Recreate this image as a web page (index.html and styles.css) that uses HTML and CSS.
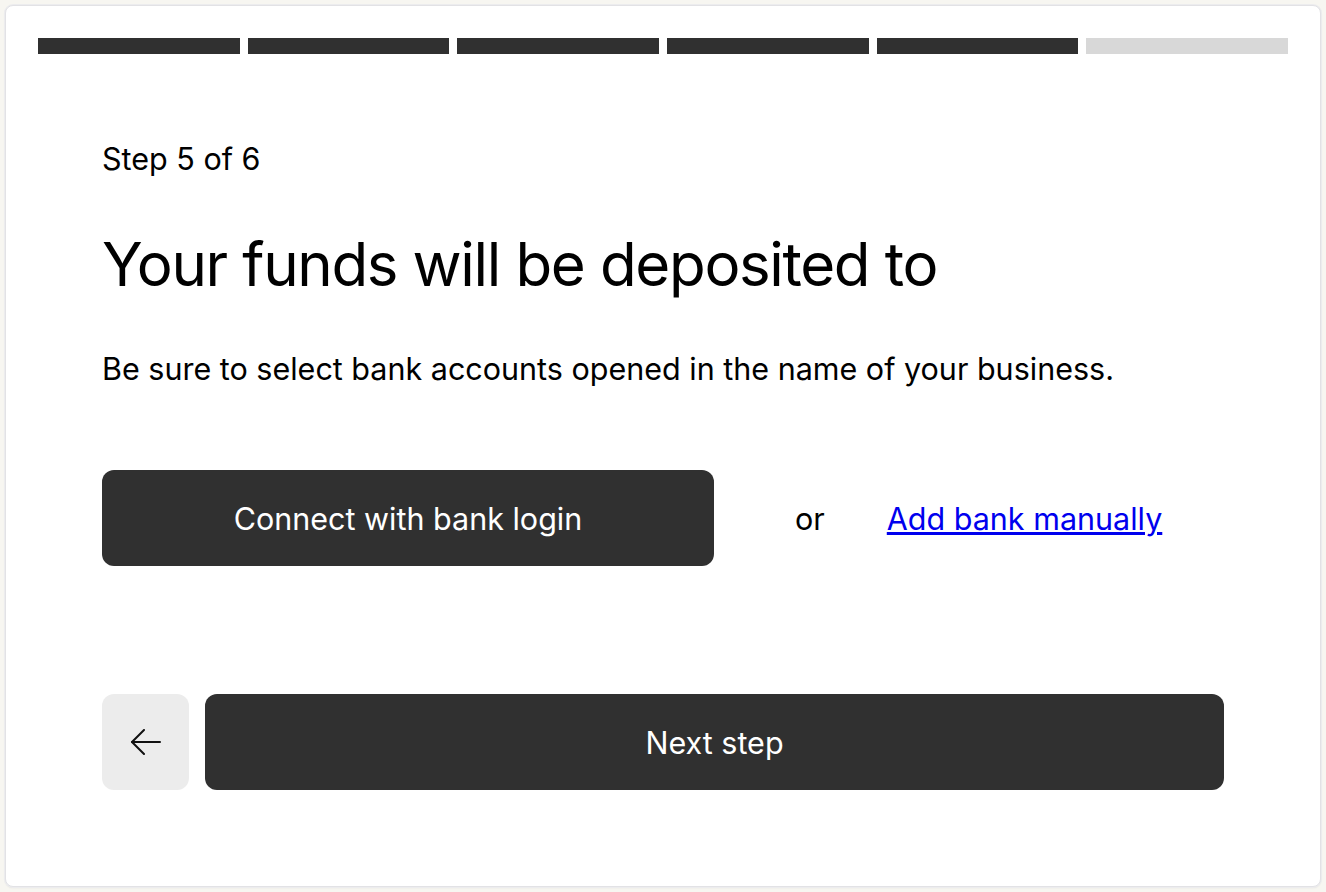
FILE: index.html
```html
<!DOCTYPE html>
<html lang="en">
<head>
    <meta charset="UTF-8">
    <meta name="viewport" content="width=device-width, initial-scale=1.0">
    <title>Bank Account Setup</title>
    <link rel="stylesheet" href="styles.css">
</head>
<body>
    <div class="card">
        <!-- Progress bar -->
        <div class="progress">
            <span class="segment done"></span>
            <span class="segment done"></span>
            <span class="segment done"></span>
            <span class="segment done"></span>
            <span class="segment done"></span>
            <span class="segment"></span>
        </div>

        <div class="content">
            <p class="step">Step 5 of 6</p>
            <h1>Your funds will be deposited to</h1>
            <p class="lead">Be sure to select bank accounts opened in the name of your business.</p>

            <div class="connect-row">
                <button class="btn btn-dark connect">Connect with bank login</button>
                <span class="or">or</span>
                <a href="#" class="manual-link">Add bank manually</a>
            </div>

            <div class="nav-row">
                <button class="btn btn-back" aria-label="Back">
                    <svg width="32" height="26" viewBox="0 0 32 26" fill="none" stroke="#111" stroke-width="2" stroke-linecap="round" stroke-linejoin="round">
                        <path d="M30 13H2"/>
                        <path d="M14 1L2 13l12 12"/>
                    </svg>
                </button>
                <button class="btn btn-dark next">Next step</button>
            </div>
        </div>
    </div>
</body>
</html>
```

FILE: styles.css
```css
body {
    margin: 0;
    padding: 5px;
    background-color: #f7f6f1;
    font-family: Inter, "Noto Sans", sans-serif;
    color: #000;
}
.card {
    background-color: #ffffff;
    border: 1px solid #e2e2e5;
    border-radius: 8px;
    box-shadow: 0 0 0 1px #ececee, 0 1px 2px rgba(0, 0, 0, 0.08);
    padding: 32px 32px 96px;
    min-height: 882px;
    box-sizing: border-box;
}
.progress {
    display: flex;
    gap: 8px;
}
.segment {
    flex: 1;
    height: 16px;
    background-color: #d8d8d8;
}
.segment.done {
    background-color: #303030;
}
.content {
    padding: 0 64px;
}
.step {
    margin: 88px 0 0;
    font-size: 30.5px;
    line-height: 34px;
}
h1 {
    margin: 54px 0 0;
    font-size: 60px;
    font-weight: 400;
    line-height: 68px;
    letter-spacing: -1.35px;
}
.lead {
    margin: 54px 0 0;
    font-size: 30.5px;
    line-height: 34px;
}
.btn {
    border: none;
    border-radius: 12px;
    height: 96px;
    font-family: inherit;
    font-size: 30.5px;
    cursor: pointer;
}
.btn-dark {
    background-color: #303030;
    color: #ffffff;
}
.connect-row {
    display: flex;
    align-items: center;
    margin-top: 84px;
}
.connect {
    width: 612px;
}
.or {
    font-size: 30.5px;
    margin-left: 81px;
}
.manual-link {
    font-size: 30.5px;
    color: #0000ee;
    margin-left: 62px;
}
.nav-row {
    display: flex;
    gap: 16px;
    margin-top: 128px;
}
.btn-back {
    width: 87px;
    background-color: #ececec;
    display: flex;
    align-items: center;
    justify-content: center;
}
.next {
    flex: 1;
}
```
